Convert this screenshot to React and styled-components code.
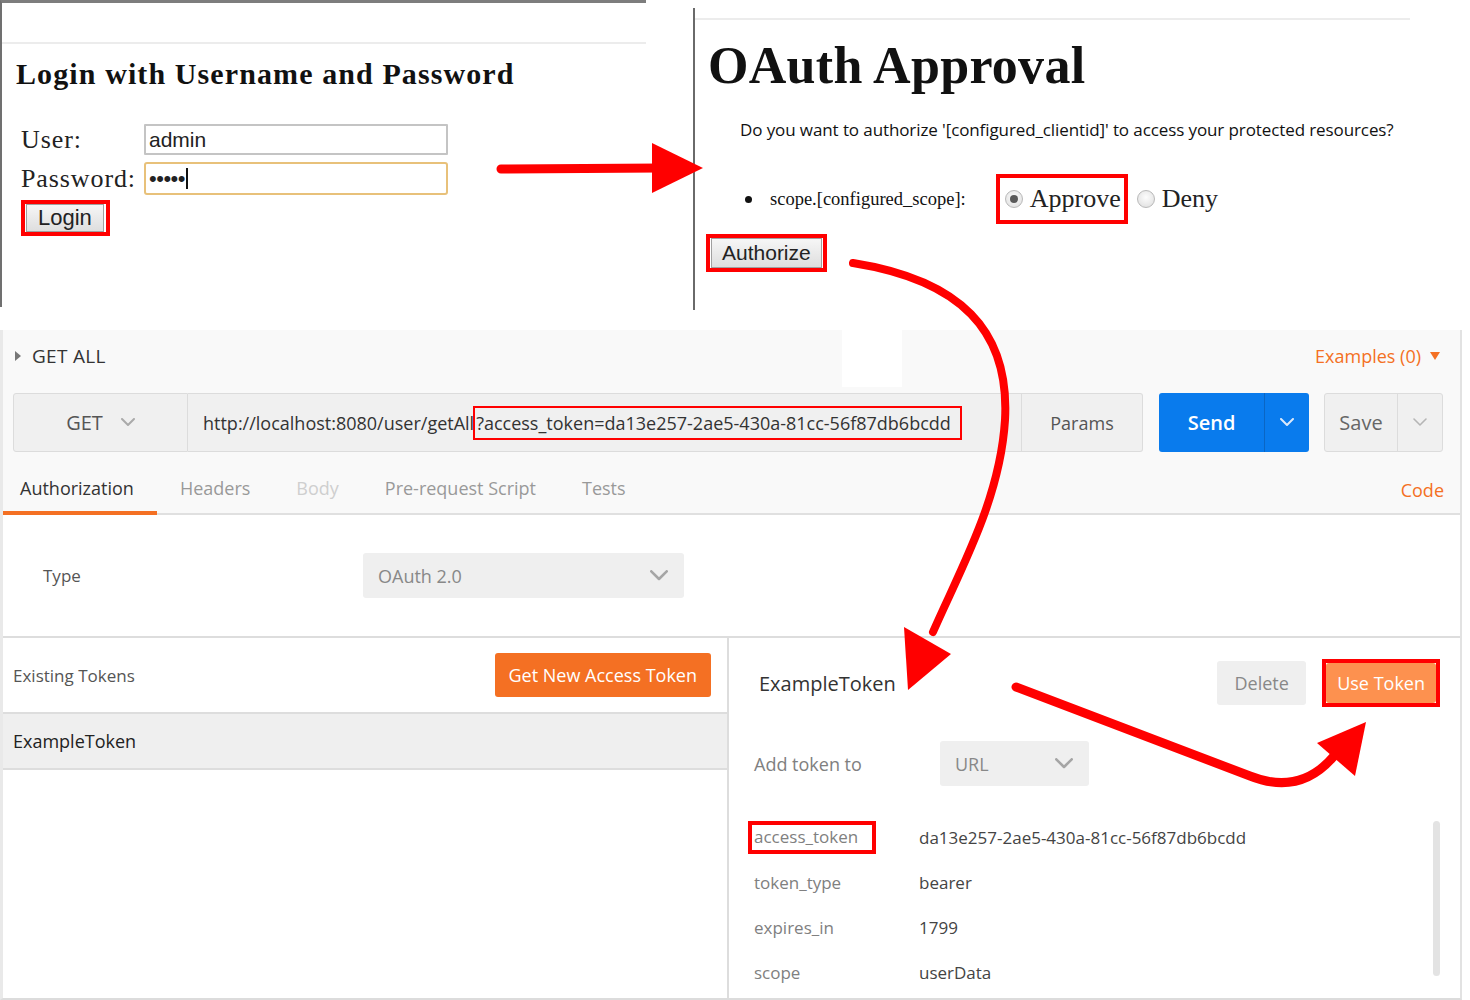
import React from "react";
import styled, { createGlobalStyle } from "styled-components";

const GlobalStyle = createGlobalStyle`
  html, body {
    margin: 0;
    padding: 0;
    background: #fff;
  }
  body {
    font-family: "Open Sans", "Liberation Sans", sans-serif;
  }
  * {
    box-sizing: border-box;
  }
`;

const Page = styled.div`
  position: relative;
  width: 1470px;
  height: 1000px;
  overflow: hidden;
  background: #fff;
`;

const TopRow = styled.div`
  display: flex;
  height: 330px;
`;

/* ---------- login screenshot ---------- */

const LoginPanel = styled.div`
  width: 646px;
  height: 307px;
  border-top: 3px solid #7d7d7d;
  border-left: 2px solid #707070;
`;

const BrowserBar = styled.div`
  height: ${(p) => p.$h}px;
  width: ${(p) => p.$w || "100%"};
  border-bottom: 2px solid #ececec;
`;

const LoginTitle = styled.h2`
  margin: 12px 0 0 14px;
  font-family: "Liberation Serif", serif;
  font-weight: 700;
  font-size: 30px;
  line-height: 36px;
  letter-spacing: 1.1px;
  color: #111;
`;

const LoginForm = styled.div`
  display: grid;
  grid-template-columns: 123px 304px;
  row-gap: 7px;
  align-items: center;
  margin: 32px 0 0 19px;
`;

const SerifLabel = styled.span`
  font-family: "Liberation Serif", serif;
  font-size: 26px;
  color: #222;
  letter-spacing: 0.9px;
`;

const TextInput = styled.div`
  height: ${(p) => (p.$focus ? 33 : 31)}px;
  border: ${(p) => (p.$focus ? "2px solid #e8c17a" : "2px solid #c4c4c4")};
  border-radius: ${(p) => (p.$focus ? 3 : 1)}px;
  display: flex;
  align-items: center;
  padding-left: 3px;
  font-family: "Liberation Sans", sans-serif;
  font-size: 21px;
  color: #222;
`;

const Dots = styled.span`
  font-size: 22px;
  letter-spacing: -0.5px;
  line-height: 1;
`;

const Caret = styled.span`
  display: inline-block;
  width: 2px;
  height: 21px;
  background: #111;
  margin-left: 1px;
`;

const Highlight = styled.div`
  display: inline-flex;
  align-items: center;
  border: 4px solid #ff0000;
  padding: ${(p) => p.$pad || "0"};
  margin: ${(p) => p.$m || "0"};
`;

const GrayButton = styled.div`
  height: ${(p) => p.$h}px;
  padding: 0 ${(p) => p.$px}px;
  display: flex;
  align-items: center;
  background: linear-gradient(#f6f6f6, #dedede);
  border: 1px solid #a0a0a0;
  font-family: "Liberation Sans", sans-serif;
  font-size: ${(p) => p.$fs || 21}px;
  color: #222;
`;

const LoginButtonRow = styled.div`
  grid-column: 1 / span 2;
  margin-top: -2px;
`;

/* ---------- oauth approval screenshot ---------- */

const OAuthPanel = styled.div`
  margin: 8px 0 0 47px;
  width: 760px;
  height: 302px;
  border-left: 2px solid #6a6a6a;
`;

const OAuthTitle = styled.h1`
  margin: 16px 0 0 13px;
  font-family: "Liberation Serif", serif;
  font-weight: 700;
  font-size: 52px;
  line-height: 60px;
  color: #111;
  letter-spacing: 0.3px;
`;

const Question = styled.p`
  margin: 22px 0 0 45px;
  font-size: 17px;
  color: #111;
  letter-spacing: -0.1px;
`;

const ScopeRow = styled.div`
  display: flex;
  align-items: center;
  margin: 33px 0 0 50px;
`;

const Bullet = styled.span`
  width: 7px;
  height: 7px;
  border-radius: 50%;
  background: #111;
  margin-right: 18px;
`;

const ScopeText = styled.span`
  font-family: "Liberation Serif", serif;
  font-size: 18.5px;
  color: #111;
  margin-right: 30px;
`;

const Radio = styled.span`
  width: 18px;
  height: 18px;
  border-radius: 50%;
  border: 1px solid #b9b9b9;
  background: radial-gradient(circle at 50% 40%, #fdfdfd, #dcdcdc);
  display: inline-flex;
  align-items: center;
  justify-content: center;
  margin: 0 7px 0 ${(p) => (p.$checked ? 5 : 9)}px;
  &::after {
    content: "";
    width: 8px;
    height: 8px;
    border-radius: 50%;
    background: ${(p) => (p.$checked ? "#5a5a5a" : "transparent")};
  }
`;

const ChoiceText = styled.span`
  font-family: "Liberation Serif", serif;
  font-size: 26px;
  color: #222;
  padding-right: 3px;
`;

const AuthorizeWrap = styled.div`
  margin: 10px 0 0 11px;
`;

/* ---------- postman ---------- */

const Postman = styled.div`
  position: relative;
  width: 1462px;
  height: 670px;
  border-left: 3px solid #e9e9e9;
  border-right: 2px solid #e2e2e2;
  border-bottom: 2px solid #dcdcdc;
  display: flex;
  flex-direction: column;
`;

const TopArea = styled.div`
  background: #f9f9f9;
`;

const RequestHeader = styled.div`
  position: relative;
  height: 52px;
  display: flex;
  align-items: center;
  justify-content: space-between;
  padding: 0 20px 0 12px;
`;

const Cutout = styled.div`
  position: absolute;
  left: 839px;
  top: 0;
  width: 60px;
  height: 57px;
  background: #fff;
`;

const RequestName = styled.div`
  display: flex;
  align-items: center;
  gap: 11px;
  font-size: 19px;
  font-weight: 500;
  letter-spacing: 0.3px;
  color: #333;
  &::before {
    content: "";
    border-left: 6px solid #777;
    border-top: 5px solid transparent;
    border-bottom: 5px solid transparent;
  }
`;

const OrangeLink = styled.div`
  display: flex;
  align-items: center;
  gap: 9px;
  font-size: 18px;
  color: #f47023;
`;

const DownTriangle = styled.span`
  border-top: 8px solid #f47023;
  border-left: 5.5px solid transparent;
  border-right: 5.5px solid transparent;
`;

const RequestRow = styled.div`
  display: flex;
  height: 59px;
  margin-top: 11px;
  padding: 0 17px 0 10px;
`;

const Field = styled.div`
  display: flex;
  align-items: center;
  justify-content: ${(p) => p.$justify || "flex-start"};
  gap: ${(p) => p.$gap || 0}px;
  width: ${(p) => (p.$w ? `${p.$w}px` : "auto")};
  flex: ${(p) => (p.$grow ? 1 : "none")};
  padding-left: ${(p) => p.$pl || 0}px;
  background: #f0f0f0;
  border: 1px solid #dcdcdc;
  border-left: ${(p) => (p.$first ? "1px solid #dcdcdc" : "none")};
  border-radius: ${(p) => p.$radius || "0"};
  font-size: ${(p) => p.$fs || 18}px;
  color: ${(p) => p.$color || "#555"};
`;

const UrlHighlight = styled.span`
  border: 2px solid #ff0000;
  padding: 3px 9px 3px 1px;
  margin-left: -1px;
`;

const SplitButton = styled.div`
  display: flex;
  width: ${(p) => p.$w}px;
  margin-left: ${(p) => p.$ml}px;
  border-radius: 3px;
  overflow: hidden;
  background: ${(p) => (p.$primary ? "#097bed" : "#f0f0f0")};
  border: ${(p) => (p.$primary ? "none" : "1px solid #dcdcdc")};
`;

const SplitMain = styled.div`
  flex: 1;
  display: flex;
  align-items: center;
  justify-content: center;
  font-size: 20px;
  font-weight: ${(p) => (p.$primary ? 600 : 500)};
  color: ${(p) => (p.$primary ? "#fff" : "#666")};
`;

const SplitCaret = styled.div`
  width: ${(p) => p.$w}px;
  display: flex;
  align-items: center;
  justify-content: center;
  border-left: 1px solid ${(p) => (p.$primary ? "#0a66c4" : "#dcdcdc")};
`;

const TabBar = styled.div`
  display: flex;
  align-items: flex-end;
  height: 63px;
  border-bottom: 2px solid #e0e0e0;
  padding-right: 16px;
`;

const Tab = styled.div`
  height: 50px;
  padding: 0 ${(p) => (p.$first ? "23px 0 17px" : "23px")};
  margin-bottom: -2px;
  display: flex;
  align-items: center;
  font-size: 18px;
  color: ${(p) => (p.$active ? "#333" : p.$muted ? "#cfcfcf" : "#999")};
  border-bottom: 4px solid ${(p) => (p.$active ? "#f47023" : "transparent")};
`;

const TabSpacer = styled.div`
  flex: 1;
`;

const CodeLink = styled.div`
  height: 50px;
  display: flex;
  align-items: center;
  font-size: 18px;
  color: #f47023;
  padding-top: 4px;
`;

const TypeArea = styled.div`
  display: grid;
  grid-template-columns: 320px 321px;
  align-items: center;
  height: 123px;
  padding-left: 40px;
  border-bottom: 2px solid #dddddd;
`;

const Label = styled.span`
  font-size: ${(p) => p.$fs || 17}px;
  color: ${(p) => p.$color || "#808080"};
`;

const Select = styled.div`
  display: flex;
  align-items: center;
  justify-content: space-between;
  width: ${(p) => p.$w}px;
  height: 45px;
  padding: 0 16px 0 15px;
  background: #efefef;
  border-radius: 3px;
  font-size: 18px;
  color: #888;
`;

const Split = styled.div`
  flex: 1;
  display: flex;
`;

const TokenList = styled.div`
  width: 726px;
  border-right: 2px solid #dddddd;
`;

const ListHeader = styled.div`
  height: 76px;
  display: flex;
  align-items: center;
  justify-content: space-between;
  padding: 0 16px 0 10px;
  border-bottom: 2px solid #dddddd;
`;

const OrangeButton = styled.div`
  height: ${(p) => p.$h}px;
  padding: 0 ${(p) => p.$px}px;
  display: flex;
  align-items: center;
  border-radius: 3px;
  background: ${(p) => p.$bg};
  color: #fff;
  font-size: 18px;
`;

const TokenRow = styled.div`
  height: 56px;
  display: flex;
  align-items: center;
  padding-left: 10px;
  background: #efefef;
  border-bottom: 2px solid #dddddd;
  font-size: 18px;
  color: #222;
`;

const TokenDetail = styled.div`
  flex: 1;
  padding: 0 20px 0 25px;
`;

const DetailHeader = styled.div`
  height: 90px;
  display: flex;
  align-items: center;
`;

const DetailTitle = styled.span`
  margin-left: 5px;
  font-size: 20px;
  color: #333;
  flex: 1;
`;

const DeleteButton = styled.div`
  height: 44px;
  width: 89px;
  display: flex;
  align-items: center;
  justify-content: center;
  border-radius: 3px;
  background: #efefef;
  color: #888;
  font-size: 18px;
  margin-right: 16px;
`;

const AddRow = styled.div`
  display: grid;
  grid-template-columns: 186px 149px;
  align-items: center;
  margin-top: 13px;
`;

const KvArea = styled.div`
  display: flex;
  margin-top: 29px;
`;

const KvList = styled.div`
  flex: 1;
  display: grid;
  grid-template-columns: 165px 1fr;
  grid-auto-rows: 45px;
  align-items: center;
`;

const Scrollbar = styled.div`
  width: 7px;
  height: 155px;
  margin: 6px 0 0;
  border-radius: 4px;
  background: #e3e3e3;
`;

const Overlay = styled.svg`
  position: absolute;
  left: 0;
  top: 0;
  pointer-events: none;
`;

const Chevron = ({ color = "#999", w = 14, stroke = 2 }) => (
  <svg width={w} height={w * 0.6} viewBox="0 0 14 8.4">
    <polyline
      points="1,1 7,7 13,1"
      fill="none"
      stroke={color}
      strokeWidth={stroke}
      strokeLinecap="round"
      strokeLinejoin="round"
    />
  </svg>
);

const tokenFields = [
  ["access_token", "da13e257-2ae5-430a-81cc-56f87db6bcdd"],
  ["token_type", "bearer"],
  ["expires_in", "1799"],
  ["scope", "userData"],
];

export default function App() {
  return (
    <Page>
      <GlobalStyle />
      <TopRow>
        <LoginPanel>
          <BrowserBar $h={41} />
          <LoginTitle>Login with Username and Password</LoginTitle>
          <LoginForm>
            <SerifLabel>User:</SerifLabel>
            <TextInput>admin</TextInput>
            <SerifLabel>Password:</SerifLabel>
            <TextInput $focus>
              <Dots>•••••</Dots>
              <Caret />
            </TextInput>
            <LoginButtonRow>
              <Highlight $pad="0 2px 0 1px">
                <GrayButton $h={28} $px={11} $fs={22}>Login</GrayButton>
              </Highlight>
            </LoginButtonRow>
          </LoginForm>
        </LoginPanel>

        <OAuthPanel>
          <BrowserBar $h={12} $w="715px" />
          <OAuthTitle>OAuth Approval</OAuthTitle>
          <Question>
            Do you want to authorize '[configured_clientid]' to access your protected resources?
          </Question>
          <ScopeRow>
            <Bullet />
            <ScopeText>scope.[configured_scope]:</ScopeText>
            <Highlight $pad="6px 0 6px 0">
              <Radio $checked />
              <ChoiceText>Approve</ChoiceText>
            </Highlight>
            <Radio />
            <ChoiceText>Deny</ChoiceText>
          </ScopeRow>
          <AuthorizeWrap>
            <Highlight $pad="0 1px">
              <GrayButton $h={30} $px={10}>Authorize</GrayButton>
            </Highlight>
          </AuthorizeWrap>
        </OAuthPanel>
      </TopRow>

      <Postman>
        <TopArea>
          <RequestHeader>
            <RequestName>GET ALL</RequestName>
            <Cutout />
            <OrangeLink>
              Examples (0)
              <DownTriangle />
            </OrangeLink>
          </RequestHeader>
          <RequestRow>
            <Field $w={175} $first $justify="center" $gap={18} $radius="3px 0 0 3px" $fs={20} $color="#555">
              GET
              <Chevron color="#aaa" w={14} />
            </Field>
            <Field $grow $pl={15} $fs={18} $color="#333">
              http://localhost:8080/user/getAll
              <UrlHighlight>?access_token=da13e257-2ae5-430a-81cc-56f87db6bcdd</UrlHighlight>
            </Field>
            <Field $w={121} $justify="center" $radius="0 3px 3px 0" $fs={18} $color="#555">
              Params
            </Field>
            <SplitButton $primary $w={150} $ml={16}>
              <SplitMain $primary>Send</SplitMain>
              <SplitCaret $primary $w={45}>
                <Chevron color="#dbe9fb" w={14} />
              </SplitCaret>
            </SplitButton>
            <SplitButton $w={119} $ml={15}>
              <SplitMain>Save</SplitMain>
              <SplitCaret $w={45}>
                <Chevron color="#b5b5b5" w={14} stroke={1.6} />
              </SplitCaret>
            </SplitButton>
          </RequestRow>
          <TabBar>
            <Tab $first $active>Authorization</Tab>
            <Tab>Headers</Tab>
            <Tab $muted>Body</Tab>
            <Tab>Pre-request Script</Tab>
            <Tab>Tests</Tab>
            <TabSpacer />
            <CodeLink>Code</CodeLink>
          </TabBar>
        </TopArea>

        <TypeArea>
          <Label $color="#555">Type</Label>
          <Select $w={321}>
            OAuth 2.0
            <Chevron color="#a5a5a5" w={18} />
          </Select>
        </TypeArea>

        <Split>
          <TokenList>
            <ListHeader>
              <Label $color="#555">Existing Tokens</Label>
              <OrangeButton $h={44} $px={14} $bg="#f47023">Get New Access Token</OrangeButton>
            </ListHeader>
            <TokenRow>ExampleToken</TokenRow>
          </TokenList>

          <TokenDetail>
            <DetailHeader>
              <DetailTitle>ExampleToken</DetailTitle>
              <DeleteButton>Delete</DeleteButton>
              <Highlight>
                <OrangeButton $h={40} $px={11} $bg="#fd914f">Use Token</OrangeButton>
              </Highlight>
            </DetailHeader>
            <AddRow>
              <Label $fs={18}>Add token to</Label>
              <Select $w={149}>
                URL
                <Chevron color="#a5a5a5" w={18} />
              </Select>
            </AddRow>
            <KvArea>
              <KvList>
                {tokenFields.map(([k, v], i) => (
                  <React.Fragment key={k}>
                    {i === 0 ? (
                      <div>
                        <Highlight $pad="0 14px 2px 2px" $m="0 0 0 -6px">
                          <Label>{k}</Label>
                        </Highlight>
                      </div>
                    ) : (
                      <Label>{k}</Label>
                    )}
                    <Label $color="#444">{v}</Label>
                  </React.Fragment>
                ))}
              </KvList>
              <Scrollbar />
            </KvArea>
          </TokenDetail>
        </Split>
      </Postman>

      <Overlay width="1470" height="1000" viewBox="0 0 1470 1000">
        <g fill="#ff0000" stroke="#ff0000" strokeLinecap="round">
          <line x1="501" y1="169" x2="660" y2="168" strokeWidth="9" />
          <polygon points="652,143 703,168 652,193" stroke="none" />
          <path
            d="M853,263 C960,280 1010,330 1005,420 C1000,500 960,570 933,632"
            fill="none"
            strokeWidth="8"
          />
          <polygon points="904,627 951,654 908,690" stroke="none" />
          <path
            d="M1016,687 L1250,776 Q1300,796 1334,756"
            fill="none"
            strokeWidth="9"
          />
          <polygon points="1317,743 1366,722 1355,776" stroke="none" />
        </g>
      </Overlay>
    </Page>
  );
}
